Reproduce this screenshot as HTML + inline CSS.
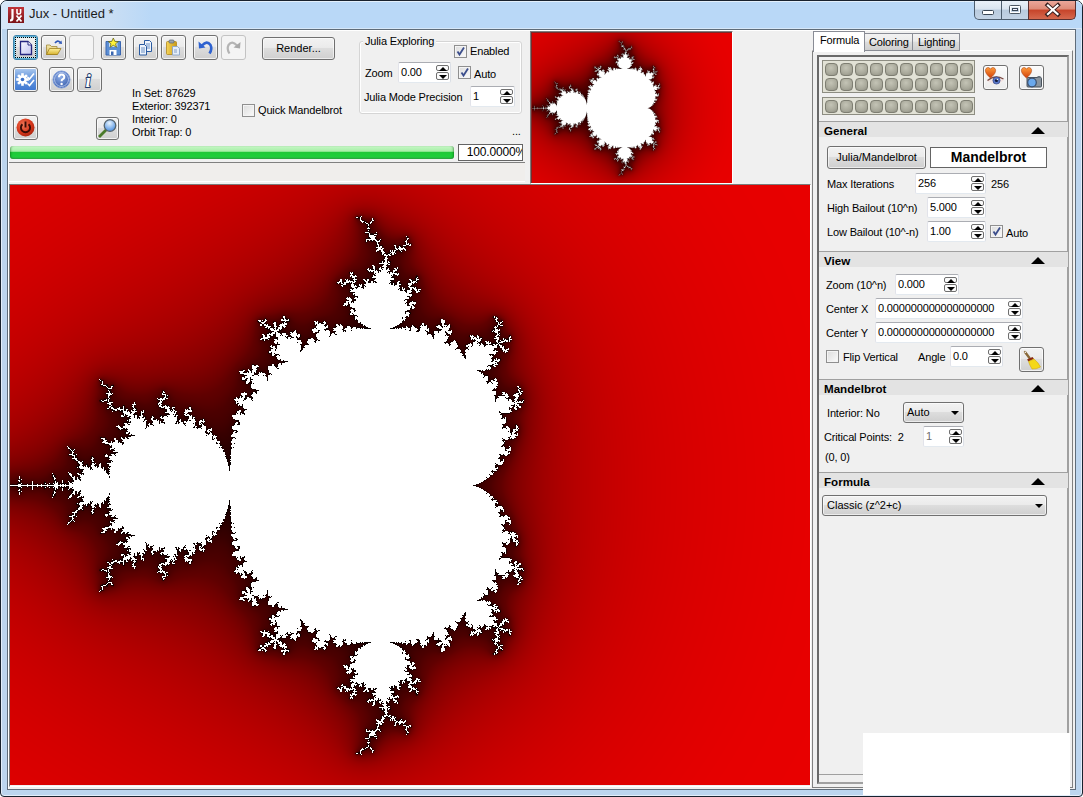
<!DOCTYPE html>
<html><head><meta charset="utf-8"><title>Jux - Untitled *</title>
<style>*{box-sizing:border-box}
html,body{margin:0;padding:0}
body{width:1083px;height:797px;overflow:hidden;position:relative;background:#fff;font-family:"Liberation Sans",sans-serif;font-size:11px;color:#000}
.a,.t,.tb,.ed,.up,.dn,.ck,.hd,.bx{position:absolute}
.t{white-space:nowrap;line-height:13px;font-size:11px;letter-spacing:-0.15px}
.b{font-weight:bold;letter-spacing:0}
#frame{position:absolute;left:0;top:0;width:1083px;height:797px;border:1px solid #18222e;border-radius:7px 7px 4px 4px;background:#bcd5ee;box-shadow:inset 0 0 0 1px #e3eefa}
#title{position:absolute;left:1px;top:1px;width:1081px;height:28px;border-radius:6px 6px 0 0;background:linear-gradient(90deg,#d7e7f7 0px,#c9def4 110px,#b9d8f7 150px,#b9d8f7 100%);border-top:1px solid #e3f0fc;border-bottom:1px solid #d6e7f8}
#client{position:absolute;left:7px;top:29px;width:1069px;height:761px;border:1px solid #5f6c79;background:#f0f0f0;box-shadow:inset 1px 1px 0 #fff}
.tb{border:1px solid #707070;border-radius:3px;background:linear-gradient(#f2f2f2 0%,#ebebeb 45%,#dddddd 50%,#cfcfcf 100%);box-shadow:inset 0 0 0 1px rgba(255,255,255,.7)}
.tb.dis{border-color:#c3c3c3;background:#f4f4f4;box-shadow:none}
.ed{background:#fff;border:1px solid;border-color:#abadb3 #dbdfe6 #e3e9ef #e2e3ea;border-radius:2px}
.up,.dn{width:13px;height:8px;border:1px solid #6f6f6f;border-radius:2px;background:#fafafa}
.tu{position:absolute;left:1.5px;top:1px;width:0;height:0;border-left:4px solid transparent;border-right:4px solid transparent;border-bottom:4px solid #000}
.td{position:absolute;left:1.5px;top:2px;width:0;height:0;border-left:4px solid transparent;border-right:4px solid transparent;border-top:4px solid #000}
.ck{width:13px;height:13px;border:1px solid #8f8f8f;background:linear-gradient(135deg,#dcdcdc,#fbfbfb);box-shadow:inset 0 0 0 1px #f4f4f4}
.hd{left:819px;width:249px;height:16px;border-top:1px solid #a0a0a0;background:#e3e3e3}
.tri{position:absolute;left:212px;top:5px;width:0;height:0;border-left:7px solid transparent;border-right:7px solid transparent;border-bottom:7px solid #000}
.btn{position:absolute;border:1px solid #707070;border-radius:3px;background:linear-gradient(#f2f2f2 0%,#ebebeb 45%,#dddddd 50%,#cfcfcf 100%);text-align:center;line-height:20px;box-shadow:inset 0 0 0 1px rgba(255,255,255,.6)}
.tb.foc{border-color:#3d84ac;box-shadow:inset 0 0 0 1px #5fb2d6,inset 0 0 0 2px #bfe6f5}
.up{height:6px}
.tb.lt{background:linear-gradient(#fbfbfb,#ececec)}
</style></head><body>
<div id="frame"></div><div id="title"></div>
<div class="t" style="left:29px;top:7px;font-size:13px;letter-spacing:0;color:#1b1b1b">Jux - Untitled *</div>
<div class="a" style="left:8px;top:7px;width:16px;height:16px"><svg width="16" height="16" style="position:absolute;left:0;top:0"><defs><linearGradient id="gjux" x1="0" y1="0" x2="0" y2="1"><stop offset="0" stop-color="#c0343a"/><stop offset="1" stop-color="#7a1418"/></linearGradient></defs><rect width="16" height="16" fill="url(#gjux)"/><path d="M4.5 2 V11 Q4.5 13.5 2 13.5" fill="none" stroke="#fff" stroke-width="2.2"/><path d="M9 2 V5.5 Q9 7 10.8 7 Q12.6 7 12.6 5.5 V2" fill="none" stroke="#fff" stroke-width="1.6"/><path d="M8.5 8.5 L13.5 14.5 M13.5 8.5 L8.5 14.5" stroke="#fff" stroke-width="1.8"/></svg></div>
<div id="client"></div>
<svg width="0" height="0" style="position:absolute"><defs>
<linearGradient id="gdoc" x1="0" y1="0" x2="1" y2="1"><stop offset="0" stop-color="#f8f8ff"/><stop offset="1" stop-color="#c4c4f0"/></linearGradient>
<linearGradient id="gfold" x1="0" y1="0" x2="0" y2="1"><stop offset="0" stop-color="#f4e8b0"/><stop offset="1" stop-color="#d8b850"/></linearGradient>
<linearGradient id="gflap" x1="0" y1="0" x2="0" y2="1"><stop offset="0" stop-color="#fff2a0"/><stop offset="1" stop-color="#d6b22e"/></linearGradient>
<linearGradient id="gset" x1="0" y1="0" x2="0" y2="1"><stop offset="0" stop-color="#9cc0ee"/><stop offset="0.45" stop-color="#5c8fd8"/><stop offset="1" stop-color="#3a72cc"/></linearGradient>
<radialGradient id="ghelp" cx="0.45" cy="0.35" r="0.7"><stop offset="0" stop-color="#8eaee8"/><stop offset="1" stop-color="#3559a8"/></radialGradient>
<radialGradient id="gpow" cx="0.4" cy="0.35" r="0.7"><stop offset="0" stop-color="#f07a5a"/><stop offset="0.6" stop-color="#d8371c"/><stop offset="1" stop-color="#a82410"/></radialGradient>
<radialGradient id="glens" cx="0.45" cy="0.3" r="0.7"><stop offset="0" stop-color="#e8f4ff"/><stop offset="1" stop-color="#4b8fe0"/></radialGradient>
<linearGradient id="gclip" x1="0" y1="0" x2="1" y2="0"><stop offset="0" stop-color="#f6d458"/><stop offset="1" stop-color="#c89a18"/></linearGradient>
<linearGradient id="gheart" x1="0" y1="0" x2="0" y2="1"><stop offset="0" stop-color="#ff9a3a"/><stop offset="1" stop-color="#d0400a"/></linearGradient>
</defs></svg>
<div class="tb foc" style="left:13px;top:35px;width:25px;height:25px;"><div style="position:absolute;left:1px;top:1px;width:21px;height:21px;border:1px dotted #000"></div><svg width="25" height="25" viewBox="0 0 25 25" style="position:absolute;left:-1px;top:-1px"><path d="M7.5 6.5 H15 L18.5 10 V19.5 H7.5 Z" fill="url(#gdoc)" stroke="#262680" stroke-width="1.3"/><path d="M15 6.5 V10 H18.5" fill="#fff" stroke="#262680" stroke-width="1"/></svg></div>
<div class="tb" style="left:41px;top:35px;width:25px;height:25px;"><svg width="25" height="25" viewBox="0 0 25 25" style="position:absolute;left:-1px;top:-1px"><path d="M5.5 10 H9 L10.5 11.5 H16 V19.5 H5.5 Z" fill="url(#gfold)" stroke="#a08838" stroke-width=".8"/><path d="M5.5 19.5 L8.5 13.5 H20 L16.5 19.5 Z" fill="url(#gflap)" stroke="#a08020" stroke-width=".8"/><path d="M14 8 Q16.5 4.5 19.5 7.5" fill="none" stroke="#2f58b8" stroke-width="1.6"/><path d="M17.5 8.5 L21 9 L20.5 5.5 Z" fill="#2f58b8"/></svg></div>
<div class="tb" style="left:101px;top:35px;width:25px;height:25px;"><svg width="25" height="25" viewBox="0 0 25 25" style="position:absolute;left:-1px;top:-1px"><path d="M5 6.5 H19.5 V20 H5 Z" fill="#5c8fd4" stroke="#3a66b0" stroke-width="1"/><rect x="8" y="7" width="8.5" height="5" fill="#c8dcf4"/><rect x="8.5" y="15" width="7" height="5" fill="#fff"/><rect x="10" y="16.5" width="2.5" height="3.5" fill="#3a66b0"/><path d="M12.3 3 L13.8 6.3 L17.3 6.6 L14.6 8.8 L15.5 12.2 L12.3 10.3 L9.1 12.2 L10 8.8 L7.3 6.6 L10.8 6.3 Z" fill="#fff23a" stroke="#5a5a10" stroke-width=".7"/></svg></div>
<div class="tb" style="left:133px;top:35px;width:25px;height:25px;"><svg width="25" height="25" viewBox="0 0 25 25" style="position:absolute;left:-1px;top:-1px"><path d="M11.5 5.5 H16.5 L18.5 7.5 V16.5 H11.5 Z" fill="#eef4fc" stroke="#2a5aa0" stroke-width="1"/><path d="M13 9h4M13 11h4M13 13h4" stroke="#4a78b8" stroke-width=".8"/><path d="M6.5 9.5 H11.5 L13.5 11.5 V20 H6.5 Z" fill="#eef4fc" stroke="#2a5aa0" stroke-width="1"/><path d="M8 13h4M8 15h4M8 17h4" stroke="#4a78b8" stroke-width=".8"/></svg></div>
<div class="tb" style="left:161px;top:35px;width:25px;height:25px;"><svg width="25" height="25" viewBox="0 0 25 25" style="position:absolute;left:-1px;top:-1px"><rect x="5.5" y="6.5" width="10" height="13" rx="1" fill="url(#gclip)" stroke="#b08820" stroke-width=".8"/><rect x="8" y="5" width="5" height="3" rx="1" fill="#9aa4ae" stroke="#5a6470" stroke-width=".7"/><path d="M11.5 11.5 H16.5 L18.5 13.5 V20 H11.5 Z" fill="#e4eefa" stroke="#8aa4c8" stroke-width=".9"/><path d="M13 15h3M13 17h3" stroke="#6a88b8" stroke-width=".8"/></svg></div>
<div class="tb" style="left:193px;top:35px;width:25px;height:25px;"><svg width="25" height="25" viewBox="0 0 25 25" style="position:absolute;left:-1px;top:-1px"><path d="M9 10.5 Q14 5 17.5 10 Q19.5 14 16.5 18.5" fill="none" stroke="#2e62d0" stroke-width="2.6"/><path d="M5.5 6.5 L6 13.5 L12.5 12.5 Z" fill="#2e62d0"/></svg></div>
<div class="tb" style="left:13px;top:67px;width:25px;height:25px;"><div style="position:absolute;left:1px;top:1px;right:1px;bottom:1px;border-radius:1px;background:linear-gradient(#a7c6ee,#6b9ade 40%,#3f79d2)"></div><svg width="25" height="25" viewBox="0 0 25 25" style="position:absolute;left:-1px;top:-1px"><g transform="translate(9.5,12.5)"><circle r="4.2" fill="#fff"/><rect x="-1.3" y="-6.3" width="2.6" height="3" fill="#fff" transform="rotate(0)"/><rect x="-1.3" y="-6.3" width="2.6" height="3" fill="#fff" transform="rotate(45)"/><rect x="-1.3" y="-6.3" width="2.6" height="3" fill="#fff" transform="rotate(90)"/><rect x="-1.3" y="-6.3" width="2.6" height="3" fill="#fff" transform="rotate(135)"/><rect x="-1.3" y="-6.3" width="2.6" height="3" fill="#fff" transform="rotate(180)"/><rect x="-1.3" y="-6.3" width="2.6" height="3" fill="#fff" transform="rotate(225)"/><rect x="-1.3" y="-6.3" width="2.6" height="3" fill="#fff" transform="rotate(270)"/><rect x="-1.3" y="-6.3" width="2.6" height="3" fill="#fff" transform="rotate(315)"/><circle r="1.8" fill="#3a70c8"/></g><path d="M14.5 10 L16.5 12 L21 6.5" fill="none" stroke="#fff" stroke-width="1.6"/><path d="M14.5 16.5 L16.5 18.5 L21 13" fill="none" stroke="#fff" stroke-width="1.6"/></svg></div>
<div class="tb" style="left:49px;top:67px;width:25px;height:25px;"><svg width="25" height="25" viewBox="0 0 25 25" style="position:absolute;left:-1px;top:-1px"><circle cx="12.5" cy="12.5" r="8.5" fill="url(#ghelp)" stroke="#7d9bd8" stroke-width="1"/><circle cx="12.5" cy="12.5" r="7" fill="none" stroke="#c4d4f4" stroke-width=".8"/><path d="M10 10.2 Q10 7.5 12.6 7.5 Q15.3 7.5 15.3 10 Q15.3 11.5 13.5 12.4 Q12.6 12.9 12.6 14.3" fill="none" stroke="#fff" stroke-width="2"/><circle cx="12.6" cy="17" r="1.2" fill="#fff"/></svg></div>
<div class="tb" style="left:77px;top:67px;width:25px;height:25px;"><svg width="25" height="25" viewBox="0 0 25 25" style="position:absolute;left:-1px;top:-1px"><text x="8.5" y="20" font-family="Liberation Serif" font-style="italic" font-weight="bold" font-size="19" fill="#fff" stroke="#1e3a6a" stroke-width="1.8" paint-order="stroke">i</text></svg></div>
<div class="tb" style="left:13px;top:115px;width:25px;height:25px;"><svg width="25" height="25" viewBox="0 0 25 25" style="position:absolute;left:-1px;top:-1px"><circle cx="12.5" cy="12.5" r="9" fill="url(#gpow)"/><path d="M9.4 9.3 A4.6 4.6 0 1 0 15.6 9.3" fill="none" stroke="#3a0c06" stroke-width="1.9"/><path d="M12.5 6.5 V12.5" stroke="#3a0c06" stroke-width="1.9"/></svg></div>
<div class="tb dis" style="left:69px;top:35px;width:25px;height:25px;"></div>
<div class="tb dis" style="left:221px;top:35px;width:25px;height:25px;"><svg width="25" height="25" viewBox="0 0 25 25" style="position:absolute;left:-1px;top:-1px"><path d="M16 10.5 Q11 5 7.5 10 Q5.5 14 8.5 18.5" fill="none" stroke="#b4b4b4" stroke-width="2.2"/><path d="M19.5 7 L19 13.5 L12.5 12.5 Z" fill="#a8a8a8"/></svg></div>
<div class="tb" style="left:96px;top:117px;width:23px;height:23px;"><svg width="23" height="23" viewBox="0 0 23 23" style="position:absolute;left:-1px;top:-1px"><path d="M3 20 L10.5 12.5" stroke="#4a7a2a" stroke-width="2.8"/><circle cx="14" cy="8.5" r="5.8" fill="url(#glens)" stroke="#56646e" stroke-width="1.3"/></svg></div>
<div class="btn" style="left:262px;top:37px;width:73px;height:23px">Render...</div>
<div class="t" style="left:132px;top:87px;">In Set: 87629</div>
<div class="t" style="left:132px;top:100px;">Exterior: 392371</div>
<div class="t" style="left:132px;top:113px;">Interior: 0</div>
<div class="t" style="left:132px;top:126px;">Orbit Trap: 0</div>
<div class="ck" style="left:242px;top:104px"></div>
<div class="t" style="left:258px;top:104px;">Quick Mandelbrot</div>
<div class="a" style="left:359px;top:41px;width:163px;height:73px;border:1px solid #d5d5d5;border-radius:3px;box-shadow:inset 0 0 0 1px #fff"></div>
<div class="t" style="left:363px;top:35px;background:#f0f0f0;padding:0 2px">Julia Exploring</div>
<div class="ck" style="left:454px;top:45px"><svg width="11" height="11" style="position:absolute;left:0;top:0"><path d="M2.5 5.5 L4.5 8.5 L9 1.5" stroke="#3c4e8c" stroke-width="1.8" fill="none"/></svg></div>
<div class="t" style="left:470px;top:45px;">Enabled</div>
<div class="t" style="left:365px;top:67px;">Zoom</div>
<div class="ed" style="left:398px;top:62px;width:53px;height:21px"><div class="t" style="left:2px;top:3px;color:#000">0.00</div><div class="up" style="left:37px;top:2px"><div class="tu"></div></div><div class="dn" style="left:37px;top:9px"><div class="td"></div></div></div>
<div class="ck" style="left:458px;top:66px"><svg width="11" height="11" style="position:absolute;left:0;top:0"><path d="M2.5 5.5 L4.5 8.5 L9 1.5" stroke="#3c4e8c" stroke-width="1.8" fill="none"/></svg></div>
<div class="t" style="left:474px;top:68px;">Auto</div>
<div class="t" style="left:364px;top:91px;">Julia Mode Precision</div>
<div class="ed" style="left:470px;top:86px;width:45px;height:21px"><div class="t" style="left:2px;top:3px;color:#000">1</div><div class="up" style="left:29px;top:2px"><div class="tu"></div></div><div class="dn" style="left:29px;top:9px"><div class="td"></div></div></div>
<div class="t" style="left:512px;top:125px;">...</div>
<div class="a" style="left:10px;top:146px;width:444px;height:13px;border-radius:3px;background:linear-gradient(#c6f7c6 0%,#a8efa8 40%,#20c838 50%,#1ed03a 80%,#30a844 100%);box-shadow:inset 2px 0 2px -1px rgba(0,80,0,.45),inset -2px 0 2px -1px rgba(0,80,0,.45)"></div>
<div class="a" style="left:458px;top:144px;width:65px;height:17px;border:1px solid #646464;background:#fff;overflow:hidden"><div class="t" style="right:-4px;top:1px;font-size:12px">100.0000%</div></div>
<div class="a" style="left:9px;top:162px;width:516px;height:20px;border-top:1px solid #808080;border-bottom:1px solid #fff;background:#f0eeec"></div>
<div class="a" style="left:530px;top:31px;width:203px;height:153px;border:1px solid;border-color:#7d7d7d #fff #fff #7d7d7d;background:#7a2a2a"></div>
<svg class="a" style="left:10px;top:185px" width="800" height="600" viewBox="0 0 800 600"><defs><filter id="fblur" x="-50%" y="-50%" width="200%" height="200%"><feGaussianBlur stdDeviation="45"/></filter><linearGradient id="fbg" x1="0" y1="0" x2="1" y2="0"><stop offset="0" stop-color="#cf0000"/><stop offset="1" stop-color="#e80000"/></linearGradient><g id="mset"><path d="M460.0 300.0 L460.5 300.0 L461.8 299.7 L463.9 298.9 L466.8 297.5 L470.2 295.2 L473.9 292.0 L477.8 287.6 L481.5 282.0 L484.9 275.1 L487.6 267.2 L489.4 258.1 L490.0 248.0 L489.3 237.2 L487.0 225.8 L483.0 214.1 L477.2 202.3 L469.5 190.9 L460.0 180.0 L448.6 170.0 L435.5 161.3 L420.9 154.1 L404.9 148.7 L387.9 145.3 L370.0 144.1 L351.7 145.3 L333.3 149.0 L315.1 155.1 L297.7 163.8 L281.2 174.8 L266.1 188.0 L252.7 203.3 L241.3 220.4 L232.1 238.9 L225.4 258.6 L221.4 279.1 L220.0 300.0 L221.4 320.9 L225.4 341.4 L232.1 361.1 L241.3 379.6 L252.7 396.7 L266.1 412.0 L281.2 425.2 L297.7 436.2 L315.1 444.9 L333.3 451.0 L351.7 454.7 L370.0 455.9 L387.9 454.7 L404.9 451.3 L420.9 445.9 L435.5 438.7 L448.6 430.0 L460.0 420.0 L469.5 409.1 L477.2 397.7 L483.0 385.9 L487.0 374.2 L489.3 362.8 L490.0 352.0 L489.4 341.9 L487.6 332.8 L484.9 324.9 L481.5 318.0 L477.8 312.4 L473.9 308.0 L470.2 304.8 L466.8 302.5 L463.9 301.1 L461.8 300.3 L460.5 300.0Z"/><circle cx="160.0" cy="300.0" r="60.0"/><circle cx="370.6" cy="121.2" r="22.8"/><circle cx="370.6" cy="478.8" r="22.8"/><circle cx="85.4" cy="300.0" r="14.6"/><circle cx="467.7" cy="172.8" r="10.8"/><circle cx="467.7" cy="427.2" r="10.8"/><circle cx="279.0" cy="165.0" r="9.8"/><circle cx="279.0" cy="435.0" r="9.8"/><rect x="-80" y="299" width="240" height="2"/></g></defs><rect width="800" height="600" fill="url(#fbg)"/><use href="#mset" fill="#000" opacity=".85" filter="url(#fblur)"/><use href="#mset" fill="#fff"/></svg><svg class="a" style="left:532px;top:33px" width="200" height="150" viewBox="0 0 800 600"><rect width="800" height="600" fill="url(#fbg)"/><use href="#mset" fill="#000" opacity=".85" filter="url(#fblur)"/><use href="#mset" fill="#fff"/></svg>
<canvas id="tc" width="200" height="150" style="position:absolute;left:532px;top:33px"></canvas>
<div class="a" style="left:9px;top:184px;width:802px;height:603px;border:1px solid;border-color:#7a7a7a #fff #fff #7a7a7a"></div>
<canvas id="mc" width="800" height="600" style="position:absolute;left:10px;top:185px"></canvas>
<div class="a" style="left:812px;top:50px;width:261px;height:738px;border:1px solid;border-color:#fff #808080 #808080 #808080"></div>
<div class="a" style="left:817px;top:55px;width:252px;height:729px;border:2px solid;border-color:#696969 #a0a0a0 #a0a0a0 #696969"></div>
<div class="a" style="left:813px;top:31px;width:52px;height:21px;border:1px solid #898c95;border-bottom:none;background:#fff"><div class="t" style="left:6px;top:2px">Formula</div></div>
<div class="a" style="left:865px;top:33px;width:48px;height:18px;border:1px solid #898c95;border-left:none;background:linear-gradient(#f2f2f2,#ebebeb 45%,#dddddd 50%,#cfcfcf)"><div class="t" style="left:4px;top:2px">Coloring</div></div>
<div class="a" style="left:913px;top:33px;width:47px;height:18px;border:1px solid #898c95;border-left:none;background:linear-gradient(#f2f2f2,#ebebeb 45%,#dddddd 50%,#cfcfcf)"><div class="t" style="left:5px;top:2px">Lighting</div></div>
<div class="a" style="left:822px;top:60px;width:153px;height:33px;border:1px solid #8d8d82;background:#e2e2d6"><div class="sw" style="position:absolute;left:2px;top:2px;width:13px;height:13px;border-radius:4px;background:radial-gradient(circle at 45% 35%,#c4c4b6,#a9a99b 60%,#8e8e82);border:1px solid #7e7e72"></div><div class="sw" style="position:absolute;left:17px;top:2px;width:13px;height:13px;border-radius:4px;background:radial-gradient(circle at 45% 35%,#c4c4b6,#a9a99b 60%,#8e8e82);border:1px solid #7e7e72"></div><div class="sw" style="position:absolute;left:32px;top:2px;width:13px;height:13px;border-radius:4px;background:radial-gradient(circle at 45% 35%,#c4c4b6,#a9a99b 60%,#8e8e82);border:1px solid #7e7e72"></div><div class="sw" style="position:absolute;left:47px;top:2px;width:13px;height:13px;border-radius:4px;background:radial-gradient(circle at 45% 35%,#c4c4b6,#a9a99b 60%,#8e8e82);border:1px solid #7e7e72"></div><div class="sw" style="position:absolute;left:62px;top:2px;width:13px;height:13px;border-radius:4px;background:radial-gradient(circle at 45% 35%,#c4c4b6,#a9a99b 60%,#8e8e82);border:1px solid #7e7e72"></div><div class="sw" style="position:absolute;left:77px;top:2px;width:13px;height:13px;border-radius:4px;background:radial-gradient(circle at 45% 35%,#c4c4b6,#a9a99b 60%,#8e8e82);border:1px solid #7e7e72"></div><div class="sw" style="position:absolute;left:92px;top:2px;width:13px;height:13px;border-radius:4px;background:radial-gradient(circle at 45% 35%,#c4c4b6,#a9a99b 60%,#8e8e82);border:1px solid #7e7e72"></div><div class="sw" style="position:absolute;left:107px;top:2px;width:13px;height:13px;border-radius:4px;background:radial-gradient(circle at 45% 35%,#c4c4b6,#a9a99b 60%,#8e8e82);border:1px solid #7e7e72"></div><div class="sw" style="position:absolute;left:122px;top:2px;width:13px;height:13px;border-radius:4px;background:radial-gradient(circle at 45% 35%,#c4c4b6,#a9a99b 60%,#8e8e82);border:1px solid #7e7e72"></div><div class="sw" style="position:absolute;left:137px;top:2px;width:13px;height:13px;border-radius:4px;background:radial-gradient(circle at 45% 35%,#c4c4b6,#a9a99b 60%,#8e8e82);border:1px solid #7e7e72"></div><div class="sw" style="position:absolute;left:2px;top:17px;width:13px;height:13px;border-radius:4px;background:radial-gradient(circle at 45% 35%,#c4c4b6,#a9a99b 60%,#8e8e82);border:1px solid #7e7e72"></div><div class="sw" style="position:absolute;left:17px;top:17px;width:13px;height:13px;border-radius:4px;background:radial-gradient(circle at 45% 35%,#c4c4b6,#a9a99b 60%,#8e8e82);border:1px solid #7e7e72"></div><div class="sw" style="position:absolute;left:32px;top:17px;width:13px;height:13px;border-radius:4px;background:radial-gradient(circle at 45% 35%,#c4c4b6,#a9a99b 60%,#8e8e82);border:1px solid #7e7e72"></div><div class="sw" style="position:absolute;left:47px;top:17px;width:13px;height:13px;border-radius:4px;background:radial-gradient(circle at 45% 35%,#c4c4b6,#a9a99b 60%,#8e8e82);border:1px solid #7e7e72"></div><div class="sw" style="position:absolute;left:62px;top:17px;width:13px;height:13px;border-radius:4px;background:radial-gradient(circle at 45% 35%,#c4c4b6,#a9a99b 60%,#8e8e82);border:1px solid #7e7e72"></div><div class="sw" style="position:absolute;left:77px;top:17px;width:13px;height:13px;border-radius:4px;background:radial-gradient(circle at 45% 35%,#c4c4b6,#a9a99b 60%,#8e8e82);border:1px solid #7e7e72"></div><div class="sw" style="position:absolute;left:92px;top:17px;width:13px;height:13px;border-radius:4px;background:radial-gradient(circle at 45% 35%,#c4c4b6,#a9a99b 60%,#8e8e82);border:1px solid #7e7e72"></div><div class="sw" style="position:absolute;left:107px;top:17px;width:13px;height:13px;border-radius:4px;background:radial-gradient(circle at 45% 35%,#c4c4b6,#a9a99b 60%,#8e8e82);border:1px solid #7e7e72"></div><div class="sw" style="position:absolute;left:122px;top:17px;width:13px;height:13px;border-radius:4px;background:radial-gradient(circle at 45% 35%,#c4c4b6,#a9a99b 60%,#8e8e82);border:1px solid #7e7e72"></div><div class="sw" style="position:absolute;left:137px;top:17px;width:13px;height:13px;border-radius:4px;background:radial-gradient(circle at 45% 35%,#c4c4b6,#a9a99b 60%,#8e8e82);border:1px solid #7e7e72"></div></div>
<div class="a" style="left:822px;top:97px;width:153px;height:18px;border:1px solid #8d8d82;background:#e2e2d6"><div class="sw" style="position:absolute;left:2px;top:2px;width:13px;height:13px;border-radius:4px;background:radial-gradient(circle at 45% 35%,#c4c4b6,#a9a99b 60%,#8e8e82);border:1px solid #7e7e72"></div><div class="sw" style="position:absolute;left:17px;top:2px;width:13px;height:13px;border-radius:4px;background:radial-gradient(circle at 45% 35%,#c4c4b6,#a9a99b 60%,#8e8e82);border:1px solid #7e7e72"></div><div class="sw" style="position:absolute;left:32px;top:2px;width:13px;height:13px;border-radius:4px;background:radial-gradient(circle at 45% 35%,#c4c4b6,#a9a99b 60%,#8e8e82);border:1px solid #7e7e72"></div><div class="sw" style="position:absolute;left:47px;top:2px;width:13px;height:13px;border-radius:4px;background:radial-gradient(circle at 45% 35%,#c4c4b6,#a9a99b 60%,#8e8e82);border:1px solid #7e7e72"></div><div class="sw" style="position:absolute;left:62px;top:2px;width:13px;height:13px;border-radius:4px;background:radial-gradient(circle at 45% 35%,#c4c4b6,#a9a99b 60%,#8e8e82);border:1px solid #7e7e72"></div><div class="sw" style="position:absolute;left:77px;top:2px;width:13px;height:13px;border-radius:4px;background:radial-gradient(circle at 45% 35%,#c4c4b6,#a9a99b 60%,#8e8e82);border:1px solid #7e7e72"></div><div class="sw" style="position:absolute;left:92px;top:2px;width:13px;height:13px;border-radius:4px;background:radial-gradient(circle at 45% 35%,#c4c4b6,#a9a99b 60%,#8e8e82);border:1px solid #7e7e72"></div><div class="sw" style="position:absolute;left:107px;top:2px;width:13px;height:13px;border-radius:4px;background:radial-gradient(circle at 45% 35%,#c4c4b6,#a9a99b 60%,#8e8e82);border:1px solid #7e7e72"></div><div class="sw" style="position:absolute;left:122px;top:2px;width:13px;height:13px;border-radius:4px;background:radial-gradient(circle at 45% 35%,#c4c4b6,#a9a99b 60%,#8e8e82);border:1px solid #7e7e72"></div><div class="sw" style="position:absolute;left:137px;top:2px;width:13px;height:13px;border-radius:4px;background:radial-gradient(circle at 45% 35%,#c4c4b6,#a9a99b 60%,#8e8e82);border:1px solid #7e7e72"></div></div>
<div class="tb lt" style="left:983px;top:65px;width:25px;height:25px;"><svg width="25" height="25" viewBox="0 0 25 25" style="position:absolute;left:-1px;top:-1px"><path d="M4 16 Q12 8.5 21 15 Q13 22 4 16 Z" fill="#f4e4e2"/><path d="M4.5 15.5 Q12 9 20.5 14" fill="none" stroke="#7a4a44" stroke-width="1.3"/><circle cx="13.5" cy="15.5" r="3.6" fill="#5a78c8" stroke="#2a3a78" stroke-width=".6"/><circle cx="13.5" cy="15.5" r="1.6" fill="#101838"/><circle cx="14.3" cy="14.5" r=".7" fill="#fff"/><path d="M7.5 13 C2.5 9 1.5 5.5 3 3.5 C4.5 1.8 6.8 2.5 7.5 4.2 C8.2 2.5 10.5 1.8 12 3.5 C13.5 5.5 12.5 9 7.5 13 Z" fill="url(#gheart)" stroke="#a0380a" stroke-width=".5"/></svg></div>
<div class="tb lt" style="left:1019px;top:65px;width:25px;height:25px;"><svg width="25" height="25" viewBox="0 0 25 25" style="position:absolute;left:-1px;top:-1px"><rect x="8" y="12.5" width="14.5" height="9.5" rx="1" fill="#8a949e" stroke="#3c4650" stroke-width=".9"/><rect x="18.5" y="11" width="3" height="2" fill="#6a747e"/><circle cx="13" cy="17.5" r="4.3" fill="#6aa8ec" stroke="#3a5070" stroke-width="1.2"/><path d="M7.5 13 C2.5 9 1.5 5.5 3 3.5 C4.5 1.8 6.8 2.5 7.5 4.2 C8.2 2.5 10.5 1.8 12 3.5 C13.5 5.5 12.5 9 7.5 13 Z" fill="url(#gheart)" stroke="#a0380a" stroke-width=".5"/></svg></div>
<div class="hd" style="top:121px"><div class="t b" style="left:5px;top:2px;font-size:11.6px">General</div><div class="tri"></div></div>
<div class="btn" style="left:827px;top:146px;width:99px;height:23px">Julia/Mandelbrot</div>
<div class="a" style="left:930px;top:147px;width:117px;height:21px;border:1px solid #646464;background:#fff;text-align:center;font-weight:bold;font-size:14px;line-height:18px">Mandelbrot</div>
<div class="t" style="left:827px;top:178px;">Max Iterations</div>
<div class="ed" style="left:915px;top:173px;width:71px;height:21px"><div class="t" style="left:2px;top:3px;color:#000">256</div><div class="up" style="left:55px;top:2px"><div class="tu"></div></div><div class="dn" style="left:55px;top:9px"><div class="td"></div></div></div>
<div class="t" style="left:991px;top:178px;">256</div>
<div class="t" style="left:827px;top:202px;">High Bailout (10^n)</div>
<div class="ed" style="left:927px;top:197px;width:59px;height:21px"><div class="t" style="left:2px;top:3px;color:#000">5.000</div><div class="up" style="left:43px;top:2px"><div class="tu"></div></div><div class="dn" style="left:43px;top:9px"><div class="td"></div></div></div>
<div class="t" style="left:827px;top:226px;">Low Bailout (10^-n)</div>
<div class="ed" style="left:927px;top:221px;width:59px;height:21px"><div class="t" style="left:2px;top:3px;color:#000">1.00</div><div class="up" style="left:43px;top:2px"><div class="tu"></div></div><div class="dn" style="left:43px;top:9px"><div class="td"></div></div></div>
<div class="ck" style="left:990px;top:225px"><svg width="11" height="11" style="position:absolute;left:0;top:0"><path d="M2.5 5.5 L4.5 8.5 L9 1.5" stroke="#3c4e8c" stroke-width="1.8" fill="none"/></svg></div>
<div class="t" style="left:1006px;top:227px;">Auto</div>
<div class="hd" style="top:251px"><div class="t b" style="left:5px;top:2px;font-size:11.6px">View</div><div class="tri"></div></div>
<div class="t" style="left:826px;top:279px;">Zoom (10^n)</div>
<div class="ed" style="left:895px;top:274px;width:64px;height:21px"><div class="t" style="left:2px;top:3px;color:#000">0.000</div><div class="up" style="left:48px;top:2px"><div class="tu"></div></div><div class="dn" style="left:48px;top:9px"><div class="td"></div></div></div>
<div class="t" style="left:826px;top:303px;">Center X</div>
<div class="ed" style="left:875px;top:298px;width:148px;height:21px"><div class="t" style="left:2px;top:3px;color:#000">0.000000000000000000</div><div class="up" style="left:132px;top:2px"><div class="tu"></div></div><div class="dn" style="left:132px;top:9px"><div class="td"></div></div></div>
<div class="t" style="left:826px;top:327px;">Center Y</div>
<div class="ed" style="left:875px;top:322px;width:148px;height:21px"><div class="t" style="left:2px;top:3px;color:#000">0.000000000000000000</div><div class="up" style="left:132px;top:2px"><div class="tu"></div></div><div class="dn" style="left:132px;top:9px"><div class="td"></div></div></div>
<div class="ck" style="left:826px;top:350px"></div>
<div class="t" style="left:843px;top:351px;">Flip Vertical</div>
<div class="t" style="left:918px;top:351px;">Angle</div>
<div class="ed" style="left:950px;top:346px;width:53px;height:21px"><div class="t" style="left:2px;top:3px;color:#000">0.0</div><div class="up" style="left:37px;top:2px"><div class="tu"></div></div><div class="dn" style="left:37px;top:9px"><div class="td"></div></div></div>
<div class="tb" style="left:1019px;top:347px;width:25px;height:25px;"><svg width="25" height="25" viewBox="0 0 25 25" style="position:absolute;left:-1px;top:-1px"><path d="M6 5 L10.5 11" stroke="#8a6a3a" stroke-width="2.4" stroke-linecap="round"/><circle cx="6.3" cy="5.3" r=".8" fill="#fff"/><path d="M8 12.5 L13.5 10 L15 12 L9.5 14.5 Z" fill="#8a2a10"/><path d="M9.5 14.5 L15 12 Q19 15 21.5 20 Q17 22.5 13 22 Q10.5 18 9.5 14.5 Z" fill="#f4d818" stroke="#d0a810" stroke-width=".6"/></svg></div>
<div class="hd" style="top:379px"><div class="t b" style="left:5px;top:2px;font-size:11.6px">Mandelbrot</div><div class="tri"></div></div>
<div class="t" style="left:827px;top:407px;">Interior: No</div>
<div class="btn" style="left:903px;top:402px;width:61px;height:21px;text-align:left;padding-left:3px;line-height:18px">Auto<div class="a" style="left:47px;top:8px;width:0;height:0;border-left:4px solid transparent;border-right:4px solid transparent;border-top:4px solid #000"></div></div>
<div class="t" style="left:824px;top:431px;">Critical Points:&nbsp; 2</div>
<div class="ed" style="left:923px;top:426px;width:41px;height:21px"><div class="t" style="left:2px;top:3px;color:#6d6d6d">1</div><div class="up" style="left:25px;top:2px"><div class="tu"></div></div><div class="dn" style="left:25px;top:9px"><div class="td"></div></div></div>
<div class="t" style="left:825px;top:451px;">(0, 0)</div>
<div class="hd" style="top:472px"><div class="t b" style="left:5px;top:2px;font-size:11.6px">Formula</div><div class="tri"></div></div>
<div class="btn" style="left:822px;top:495px;width:225px;height:21px;text-align:left;padding-left:4px;line-height:18px">Classic (z^2+c)<div class="a" style="left:212px;top:8px;width:0;height:0;border-left:4px solid transparent;border-right:4px solid transparent;border-top:4px solid #000"></div></div>
<div class="a" style="left:819px;top:774px;width:248px;height:1px;background:#a0a0a0"></div>
<div class="a" style="left:974px;top:1px;width:28px;height:19px;border:1px solid #4d5d6e;border-top:none;border-radius:0 0 0 5px;background:linear-gradient(#eaf1f9,#d9e4f0 45%,#b9cbde 50%,#c3d3e5)"></div>
<div class="a" style="left:1001px;top:1px;width:28px;height:19px;border:1px solid #4d5d6e;border-top:none;background:linear-gradient(#eaf1f9,#d9e4f0 45%,#b9cbde 50%,#c3d3e5)"></div>
<div class="a" style="left:1028px;top:1px;width:48px;height:19px;border:1px solid #5a3030;border-top:none;border-radius:0 0 5px 0;background:linear-gradient(#eba79a,#de8b78 45%,#c7442a 50%,#d5694f)"></div>
<svg class="a" style="left:974px;top:0" width="102" height="20"><rect x="8.5" y="10.5" width="11" height="4" fill="#fff" stroke="#3a4654" stroke-width="1" rx="1"/><rect x="35.5" y="5.5" width="11" height="8" fill="none" stroke="#3a4654" stroke-width="1" rx="1"/><rect x="36.5" y="6.5" width="9" height="6" fill="none" stroke="#fff" stroke-width="1.2"/><rect x="38.5" y="8.5" width="5" height="2" fill="#eef" stroke="#3a4654" stroke-width="1"/><path d="M73.5 5 L84 14.5 M84 5 L73.5 14.5" stroke="#3a2020" stroke-width="4" stroke-linecap="square"/><path d="M74 5.5 L83.5 14 M83.5 5.5 L74 14" stroke="#fff" stroke-width="2.2" stroke-linecap="square"/></svg>
<div class="a" style="left:863px;top:733px;width:207px;height:62px;background:#fff"></div>
<script>(function(){
var cv=document.getElementById('mc'),ctx=cv.getContext('2d'),W=800,H=600;
var im=ctx.createImageData(W,H),d=im.data;
var TN=[4,5.9,6.75,8.1,9.3,10.6,11.7,13.6,17.8,23.7,40,120],TR=[248,230,210,176,146,118,96,76,56,40,18,0];
function pal(v){if(v<=TN[0])return TR[0];for(var q=1;q<TN.length;q++){if(v<TN[q]){var f=(v-TN[q-1])/(TN[q]-TN[q-1]);return TR[q-1]+f*(TR[q]-TR[q-1]);}}return 0;}
var MAXI=256,B2=1e10,LB=Math.log(1e5),PX=1/240,DE=0.42,NB=15.5;
for(var j=0;j<H;j++){var cy=(300-j)/240;
 for(var i=0;i<W;i++){var cx=(i-400)/240;
  var x=0,y=0,x2=0,y2=0,n=0,dx=0,dy=0,t;
  while(n<MAXI&&x2+y2<B2){t=2*(x*dx-y*dy)+1;dy=2*(x*dy+y*dx);dx=t;y=2*x*y+cy;x=x2-y2+cx;x2=x*x;y2=y*y;n++;}
  var k=(j*W+i)*4,r=255,g=255;
  if(n<MAXI){var az=Math.sqrt(x2+y2),lz=Math.log(az),nu=n+1-Math.log(lz/LB)/Math.LN2;
   var de=2*az*lz/Math.sqrt(dx*dx+dy*dy);
   if(de>=DE*PX){r=pal(nu);g=0;var q=de/PX/2.2;if(q<1)r*=q;}}
  d[k]=r;d[k+1]=g;d[k+2]=g;d[k+3]=255;}}
ctx.putImageData(im,0,0);
var c2=document.getElementById('tc').getContext('2d');
c2.imageSmoothingEnabled=true;c2.imageSmoothingQuality='high';
c2.drawImage(cv,0,0,200,150);
})();
</script>
</body></html>
